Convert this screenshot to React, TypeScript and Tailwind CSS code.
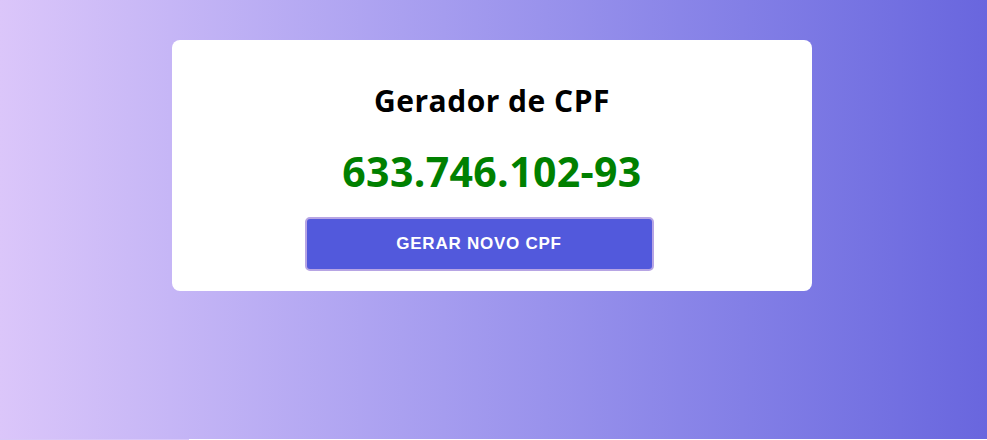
export default function App() {
  return (
    <div className="w-[987px] h-[440px] flex flex-col">
      <div className="h-[439px] bg-gradient-to-r from-[#dbc6fa] to-[#6966de] pt-[40px] pl-[172px]">
        <div className="w-[640px] h-[251px] bg-white rounded-lg flex flex-col items-center pt-[41px]">
          <h1 className="text-[30px] leading-[40px] font-bold tracking-[0.5px] text-black [font-family:'Open_Sans',sans-serif]">
            Gerador de CPF
          </h1>
          <div className="mt-[22px] text-[41px] leading-[56px] font-bold tracking-[0.35px] text-[#008000] [font-family:'Open_Sans',sans-serif]">
            633.746.102-93
          </div>
          <div className="mt-[18px] w-full flex justify-center">
            <button className="mr-[26px] w-[349px] h-[54px] bg-[#5259dc] border-2 border-[#b7a5e4] rounded-[5px] text-white font-bold text-[17px] tracking-[0.75px] [font-family:'Liberation_Sans',Arial,sans-serif]">
              GERAR NOVO CPF
            </button>
          </div>
        </div>
      </div>
      <div className="h-[1px] flex">
        <div className="w-[189px] bg-[#d8c8f8]" />
        <div className="flex-1 bg-white" />
      </div>
    </div>
  );
}
